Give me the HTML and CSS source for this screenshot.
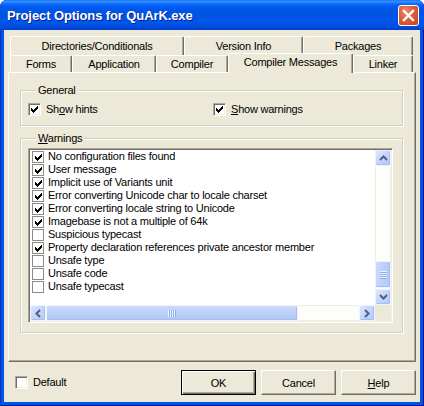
FILE: index.html
```html
<!DOCTYPE html>
<html>
<head>
<meta charset="utf-8">
<title>Project Options</title>
<link rel="stylesheet" href="styles.css">
</head>
<body>
<div class="window">
  <div class="titlebar">
    <span class="title">Project Options for QuArK.exe</span>
    <span class="close"><svg width="19" height="19" viewBox="0 0 19 19"><path d="M5 5 L14 14 M14 5 L5 14" stroke="#fff" stroke-width="2.4" stroke-linecap="square"/></svg></span>
  </div>
  <div class="client">
    <div class="tabs">
      <div class="tabrow row1">
        <div class="tab w-dir">Directories/Conditionals</div>
        <div class="tab w-ver">Version Info</div>
        <div class="tab w-pkg">Packages</div>
      </div>
      <div class="tabrow row2">
        <div class="tab w-forms">Forms</div>
        <div class="tab w-app">Application</div>
        <div class="tab w-comp">Compiler</div>
        <div class="tab w-msg sel">Compiler Messages</div>
        <div class="tab w-link">Linker</div>
      </div>
      <div class="page">
        <div class="group general">
          <div class="legend">General</div>
          <div class="checks">
            <label class="check first"><span class="cb on"><svg width="7" height="7" viewBox="0 0 7 7" shape-rendering="crispEdges"><path d="M0 2h1v3H0zM1 3h1v3H1zM2 4h1v3H2zM3 3h1v3H3zM4 2h1v3H4zM5 1h1v3H5zM6 0h1v3H6z" fill="#000"/></svg></span><span>Sh<u>o</u>w hints</span></label>
            <label class="check"><span class="cb on"><svg width="7" height="7" viewBox="0 0 7 7" shape-rendering="crispEdges"><path d="M0 2h1v3H0zM1 3h1v3H1zM2 4h1v3H2zM3 3h1v3H3zM4 2h1v3H4zM5 1h1v3H5zM6 0h1v3H6z" fill="#000"/></svg></span><span><u>S</u>how warnings</span></label>
          </div>
        </div>
        <div class="group warnings">
          <div class="legend"><u>W</u>arnings</div>
          <div class="listbox">
            <div class="listbody">
              <div class="items">
                <div class="row"><span class="cb flat on"><svg width="7" height="7" viewBox="0 0 7 7" shape-rendering="crispEdges"><path d="M0 2h1v3H0zM1 3h1v3H1zM2 4h1v3H2zM3 3h1v3H3zM4 2h1v3H4zM5 1h1v3H5zM6 0h1v3H6z" fill="#000"/></svg></span><span>No configuration files found</span></div>
                <div class="row"><span class="cb flat on"><svg width="7" height="7" viewBox="0 0 7 7" shape-rendering="crispEdges"><path d="M0 2h1v3H0zM1 3h1v3H1zM2 4h1v3H2zM3 3h1v3H3zM4 2h1v3H4zM5 1h1v3H5zM6 0h1v3H6z" fill="#000"/></svg></span><span>User message</span></div>
                <div class="row"><span class="cb flat on"><svg width="7" height="7" viewBox="0 0 7 7" shape-rendering="crispEdges"><path d="M0 2h1v3H0zM1 3h1v3H1zM2 4h1v3H2zM3 3h1v3H3zM4 2h1v3H4zM5 1h1v3H5zM6 0h1v3H6z" fill="#000"/></svg></span><span>Implicit use of Variants unit</span></div>
                <div class="row"><span class="cb flat on"><svg width="7" height="7" viewBox="0 0 7 7" shape-rendering="crispEdges"><path d="M0 2h1v3H0zM1 3h1v3H1zM2 4h1v3H2zM3 3h1v3H3zM4 2h1v3H4zM5 1h1v3H5zM6 0h1v3H6z" fill="#000"/></svg></span><span>Error converting Unicode char to locale charset</span></div>
                <div class="row"><span class="cb flat on"><svg width="7" height="7" viewBox="0 0 7 7" shape-rendering="crispEdges"><path d="M0 2h1v3H0zM1 3h1v3H1zM2 4h1v3H2zM3 3h1v3H3zM4 2h1v3H4zM5 1h1v3H5zM6 0h1v3H6z" fill="#000"/></svg></span><span>Error converting locale string to Unicode</span></div>
                <div class="row"><span class="cb flat on"><svg width="7" height="7" viewBox="0 0 7 7" shape-rendering="crispEdges"><path d="M0 2h1v3H0zM1 3h1v3H1zM2 4h1v3H2zM3 3h1v3H3zM4 2h1v3H4zM5 1h1v3H5zM6 0h1v3H6z" fill="#000"/></svg></span><span>Imagebase is not a multiple of 64k</span></div>
                <div class="row"><span class="cb flat"></span><span>Suspicious typecast</span></div>
                <div class="row"><span class="cb flat on"><svg width="7" height="7" viewBox="0 0 7 7" shape-rendering="crispEdges"><path d="M0 2h1v3H0zM1 3h1v3H1zM2 4h1v3H2zM3 3h1v3H3zM4 2h1v3H4zM5 1h1v3H5zM6 0h1v3H6z" fill="#000"/></svg></span><span>Property declaration references private ancestor member</span></div>
                <div class="row"><span class="cb flat"></span><span>Unsafe type</span></div>
                <div class="row"><span class="cb flat"></span><span>Unsafe code</span></div>
                <div class="row"><span class="cb flat"></span><span>Unsafe typecast</span></div>
              </div>
              <div class="vscroll">
                <div class="sbtn"><svg width="9" height="6" viewBox="0 0 9 6"><path d="M1 5 L4.5 1.5 L8 5" stroke="#4D6185" stroke-width="2" fill="none"/></svg></div>
                <div class="vtrack">
                  <div class="vthumb"><span class="vgrip"></span></div>
                </div>
                <div class="sbtn"><svg width="9" height="6" viewBox="0 0 9 6"><path d="M1 1 L4.5 4.5 L8 1" stroke="#4D6185" stroke-width="2" fill="none"/></svg></div>
              </div>
            </div>
            <div class="hscroll">
              <div class="sbtn"><svg width="6" height="9" viewBox="0 0 6 9"><path d="M5 1 L1.5 4.5 L5 8" stroke="#4D6185" stroke-width="2" fill="none"/></svg></div>
              <div class="hthumb"><span class="hgrip"></span></div>
              <div class="htrack"></div>
              <div class="sbtn"><svg width="6" height="9" viewBox="0 0 6 9"><path d="M1 1 L4.5 4.5 L1 8" stroke="#4D6185" stroke-width="2" fill="none"/></svg></div>
              <div class="corner"></div>
            </div>
          </div>
        </div>
      </div>
    </div>
    <div class="footer">
      <label class="check"><span class="cb"></span><span>Default</span></label>
      <div class="buttons">
        <button class="btn default">OK</button>
        <button class="btn">Cancel</button>
        <button class="btn"><span><u>H</u>elp</span></button>
      </div>
    </div>
  </div>
</div>
</body>
</html>
```
FILE: styles.css
```css
* { box-sizing: border-box; }
html, body { margin: 0; padding: 0; background: #ffffff; }
body {
  font-family: "Liberation Sans", Arial, sans-serif;
  font-size: 11px;
  letter-spacing: -0.22px;
  color: #000;
}
u { text-decoration: underline; text-underline-offset: 1px; }

.window {
  width: 424px;
  height: 406px;
  display: flex;
  flex-direction: column;
  background: #0055E8;
  border-radius: 7px 7px 0 0;
  overflow: hidden;
  box-shadow: inset 1px 0 #0A32C8, inset -1px 0 #00138C, inset 0 -1px #00138C;
}

.titlebar {
  height: 30px;
  flex: none;
  display: flex;
  align-items: center;
  padding: 1px 5px 0 7px;
  background: linear-gradient(to bottom, #0A5FEE 0, #3D95FF 1px, #2A8AFF 2px, #0A6CFB 4px, #0058EE 7px, #0054E3 14px, #0055EB 22px, #0050DD 26px, #003DD0 30px);
}
.title {
  flex: 1;
  color: #fff;
  font-size: 13px;
  font-weight: bold;
  letter-spacing: -0.1px;
  text-shadow: 1px 1px 0 #0A1E8A;
}
.close {
  width: 21px;
  height: 21px;
  display: flex;
  align-items: center;
  justify-content: center;
  border: 1px solid #fff;
  border-radius: 3px;
  background: radial-gradient(circle at 35% 30%, #ED8A6B 0, #E2603D 40%, #C8401E 100%);
}

.client {
  flex: 1;
  margin: 0 4px 4px;
  background: #ECE9D8;
  display: flex;
  flex-direction: column;
}

.tabs { padding: 6px 4px 0; }
.tabrow { display: flex; padding-left: 2px; }
.row1 { height: 19px; }
.row2 { height: 17px; align-items: flex-start; }
.tab {
  display: flex;
  align-items: center;
  justify-content: center;
  background: #ECE9D8;
  border-left: 1px solid #fff;
  border-top: 1px solid #fff;
  border-right: 1px solid #716F64;
  box-shadow: inset -1px 0 #ACA899;
  border-radius: 2px 2px 0 0;
  padding-bottom: 1px;
}
.row1 .tab { height: 19px; }
.row2 .tab { height: 17px; }
.row2 .tab.sel {
  height: 20px;
  margin-top: -2px;
  position: relative;
  z-index: 1;
  padding-bottom: 3px;
}
.w-dir { width: 174px; }
.w-ver { width: 119px; }
.w-pkg { width: 110px; }
.w-forms { width: 62px; }
.w-app { width: 84px; }
.w-comp { width: 72px; }
.w-msg { width: 125px; }
.w-link { width: 60px; }

.page {
  height: 290px;
  border: 1px solid;
  border-color: #fff #716F64 #716F64 #fff;
  box-shadow: inset -1px -1px #ACA899;
  padding: 17px 12px 0 11px;
}

.group {
  border: 1px solid #D0D0BF;
  box-shadow: inset 1px 1px #fff, 1px 1px #fff;
}
.legend {
  display: block;
  width: max-content;
  margin: -7px 0 0 8px;
  padding: 0 2px;
  line-height: 13px;
  background: #ECE9D8;
}
.general { padding: 0 7px 9px; }
.checks {
  display: flex;
  align-items: center;
  height: 13px;
  margin-top: 6px;
}
.check {
  display: flex;
  align-items: center;
  gap: 5px;
  line-height: 13px;
}
.check.first { width: 185px; }

.cb {
  width: 13px;
  height: 13px;
  flex: none;
  display: block;
  padding: 2px;
  background: #fff;
  border: 1px solid;
  border-color: #ACA899 #fff #fff #ACA899;
  box-shadow: inset 1px 1px #716F64, inset -1px -1px #F1EFE2;
}
.cb svg { display: block; }
.cb.flat {
  width: 12px;
  height: 12px;
  border: 1px solid #8E8C84;
  box-shadow: none;
}

.warnings {
  margin-top: 12px;
  padding: 0 9px 9px 7px;
}
.listbox {
  margin-top: 3px;
  width: 365px;
  height: 175px;
  padding: 1px;
  border: 1px solid;
  border-color: #ACA899 #fff #fff #ACA899;
  box-shadow: inset 1px 1px #716F64, inset -1px -1px #F1EFE2;
  display: flex;
  flex-direction: column;
  background: #fff;
}
.listbody { display: flex; height: 155px; }
.items {
  flex: 1;
  background: #fff;
  overflow: hidden;
  white-space: nowrap;
}
.row {
  height: 13px;
  display: flex;
  align-items: center;
  gap: 4px;
  padding-left: 2px;
  line-height: 13px;
}

.vscroll {
  width: 16px;
  display: flex;
  flex-direction: column;
  background: #FDFDFA;
  box-shadow: inset 1px 0 #EEEDE5, inset -1px 0 #EEEDE5;
}
.sbtn {
  width: 16px;
  height: 16px;
  flex: none;
  display: flex;
  align-items: center;
  justify-content: center;
  border: 1px solid #F0F4FD;
  border-radius: 2px;
  background: linear-gradient(135deg, #DDE8FE 0, #C6D6FB 45%, #B4C8F6 100%);
  box-shadow: inset -1px -1px #A9BEF0;
}
.sbtn svg { display: block; }
.vtrack {
  flex: 1;
  display: flex;
  flex-direction: column;
}
.vthumb {
  margin-top: auto;
  margin-bottom: 1px;
  height: 27px;
  display: flex;
  align-items: center;
  justify-content: center;
  border: 1px solid #F0F4FD;
  border-radius: 2px;
  background: linear-gradient(to right, #C9D8FC 0, #BCCFF9 60%, #B1C6F5 100%);
  box-shadow: inset -1px -1px #A9BEF0;
}
.vgrip {
  width: 7px;
  height: 8px;
  background: repeating-linear-gradient(to bottom, #EEF4FE 0 1px, #8CABF0 1px 2px);
}

.hscroll {
  display: flex;
  height: 16px;
  background: #FDFDFA;
}
.hthumb {
  width: 252px;
  display: flex;
  align-items: center;
  justify-content: center;
  border: 1px solid #F0F4FD;
  border-radius: 2px;
  background: linear-gradient(to bottom, #C9D8FC 0, #BCCFF9 60%, #B1C6F5 100%);
  box-shadow: inset -1px -1px #A9BEF0;
}
.hgrip {
  width: 8px;
  height: 7px;
  background: repeating-linear-gradient(to right, #EEF4FE 0 1px, #8CABF0 1px 2px);
}
.htrack {
  flex: 1;
  box-shadow: inset 0 1px #EEEDE5, inset 0 -1px #EEEDE5;
}
.corner {
  width: 16px;
  background: #ECE9D8;
}

.footer {
  height: 40px;
  display: flex;
  align-items: center;
  padding: 8px 4px 7px 11px;
}
.buttons {
  margin-left: auto;
  display: flex;
  gap: 5px;
}
.btn {
  width: 75px;
  height: 25px;
  margin: 0;
  padding: 0;
  font: inherit;
  letter-spacing: inherit;
  color: #000;
  background: #ECE9D8;
  border: 1px solid;
  border-color: #fff #716F64 #716F64 #fff;
  box-shadow: inset -1px -1px #ACA899;
  display: flex;
  align-items: center;
  justify-content: center;
}
.btn.default {
  border: 1px solid #000;
  box-shadow: inset 1px 1px #fff, inset -1px -1px #716F64, inset -2px -2px #ACA899;
}
```
